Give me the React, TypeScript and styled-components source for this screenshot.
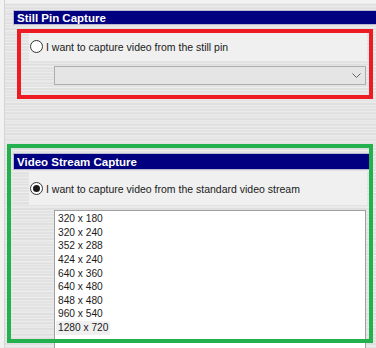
import styled, { createGlobalStyle } from "styled-components";

const GlobalStyle = createGlobalStyle`
  html, body {
    margin: 0;
    padding: 0;
    background: #f0f0f0;
  }
  * {
    box-sizing: border-box;
  }
`;

const resolutions = [
  "320 x 180",
  "320 x 240",
  "352 x 288",
  "424 x 240",
  "640 x 360",
  "640 x 480",
  "848 x 480",
  "960 x 540",
  "1280 x 720",
];

const Window = styled.div`
  position: relative;
  width: 376px;
  height: 348px;
  overflow: hidden;
  display: flex;
  font-family: "Liberation Sans", Arial, sans-serif;
  background: #f0f0f0;
`;

const LeftStrip = styled.div`
  width: 5px;
  flex: none;
  background: #f2f2f2;
  border-right: 1px solid #d4d4d4;
`;

const Main = styled.div`
  flex: 1;
  display: flex;
  flex-direction: column;
  border-top: 3px solid #f2f2f2;
  background-color: #e3e3e3;
  background-image: repeating-linear-gradient(
      180deg,
      rgba(255, 255, 255, 0.3) 0 1px,
      transparent 1px 3px
    ),
    repeating-linear-gradient(
      180deg,
      rgba(0, 0, 0, 0.02) 0 2px,
      transparent 2px 5px
    ),
    repeating-linear-gradient(
      180deg,
      rgba(255, 255, 255, 0.2) 0 1px,
      transparent 1px 7px
    );
  padding-left: 8px;

  & > * {
    flex: none;
  }
`;

const Header = styled.div<{ $top: number; $right: number; $height: number }>`
  margin-top: ${(p) => p.$top}px;
  margin-right: ${(p) => p.$right}px;
  height: ${(p) => p.$height}px;
  background: #000080;
  border: 1px solid #b8b8d0;
  color: #ffffff;
  font-weight: bold;
  font-size: 11.5px;
  display: flex;
  align-items: center;
  padding-left: 3px;
  white-space: nowrap;
`;

const OptionPanel = styled.div<{ $height: number; $top: number }>`
  margin-top: ${(p) => p.$top}px;
  margin-left: 16px;
  width: 338px;
  height: ${(p) => p.$height}px;
  background: #f0f0f0;
  display: flex;
  align-items: center;
  gap: 3px;
  padding-left: 1px;
  font-size: 10.5px;
  color: #1a1a1a;
  white-space: nowrap;
`;

const Radio = styled.span<{ $checked?: boolean }>`
  width: 13px;
  height: 13px;
  flex: none;
  border-radius: 50%;
  border: 1px solid #333333;
  background: #ffffff;
  display: flex;
  align-items: center;
  justify-content: center;

  &::after {
    content: "";
    width: 7px;
    height: 7px;
    border-radius: 50%;
    background: ${(p) => (p.$checked ? "#1a1a1a" : "transparent")};
  }
`;

const Combo = styled.div`
  margin-top: 5px;
  margin-left: 41px;
  width: 312px;
  height: 19px;
  background: #e5e5e5;
  border: 1px solid #adadad;
  display: flex;
  align-items: center;
  justify-content: flex-end;
  padding-right: 4px;
`;

const ListBox = styled.div`
  margin-top: 5px;
  margin-left: 41px;
  width: 312px;
  height: 160px;
  background: #ffffff;
  border: 1px solid #a0a0a0;
  padding: 1px 0 0 1px;
  display: flex;
  flex-direction: column;
  align-items: flex-start;
`;

const ListItem = styled.div<{ $selected?: boolean }>`
  font-size: 10.2px;
  line-height: 13.65px;
  height: 13.65px;
  padding: 0 2px 0 2px;
  color: #1a1a1a;
  background: ${(p) => (p.$selected ? "#f0f0f0" : "transparent")};
  white-space: nowrap;
`;

const Annotation = styled.div<{
  $color: string;
  $left: number;
  $top: number;
  $width: number;
  $height: number;
}>`
  position: absolute;
  left: ${(p) => p.$left}px;
  top: ${(p) => p.$top}px;
  width: ${(p) => p.$width}px;
  height: ${(p) => p.$height}px;
  border: 4px solid ${(p) => p.$color};
  pointer-events: none;
`;

const Chevron = () => (
  <svg width="9" height="5" viewBox="0 0 9 5">
    <path d="M0.5 0.5 L4.5 4.5 L8.5 0.5" fill="none" stroke="#606060" strokeWidth="1" />
  </svg>
);

export default function App() {
  return (
    <>
      <GlobalStyle />
      <Window>
        <LeftStrip />
        <Main>
          <Header $top={7} $right={-4} $height={15}>Still Pin Capture</Header>
          <OptionPanel $top={7} $height={29}>
            <Radio />
            <span>I want to capture video from the still pin</span>
          </OptionPanel>
          <Combo>
            <Chevron />
          </Combo>

          <Header $top={68} $right={3} $height={17}>Video Stream Capture</Header>
          <OptionPanel $top={2} $height={33}>
            <Radio $checked />
            <span>I want to capture video from the standard video stream</span>
          </OptionPanel>
          <ListBox>
            {resolutions.map((r, i) => (
              <ListItem key={r} $selected={i === resolutions.length - 1}>
                {r}
              </ListItem>
            ))}
          </ListBox>
        </Main>
        <Annotation $color="#ed1c24" $left={17} $top={29} $width={356} $height={70} />
        <Annotation $color="#22b14c" $left={7} $top={144} $width={366} $height={199} />
      </Window>
    </>
  );
}
